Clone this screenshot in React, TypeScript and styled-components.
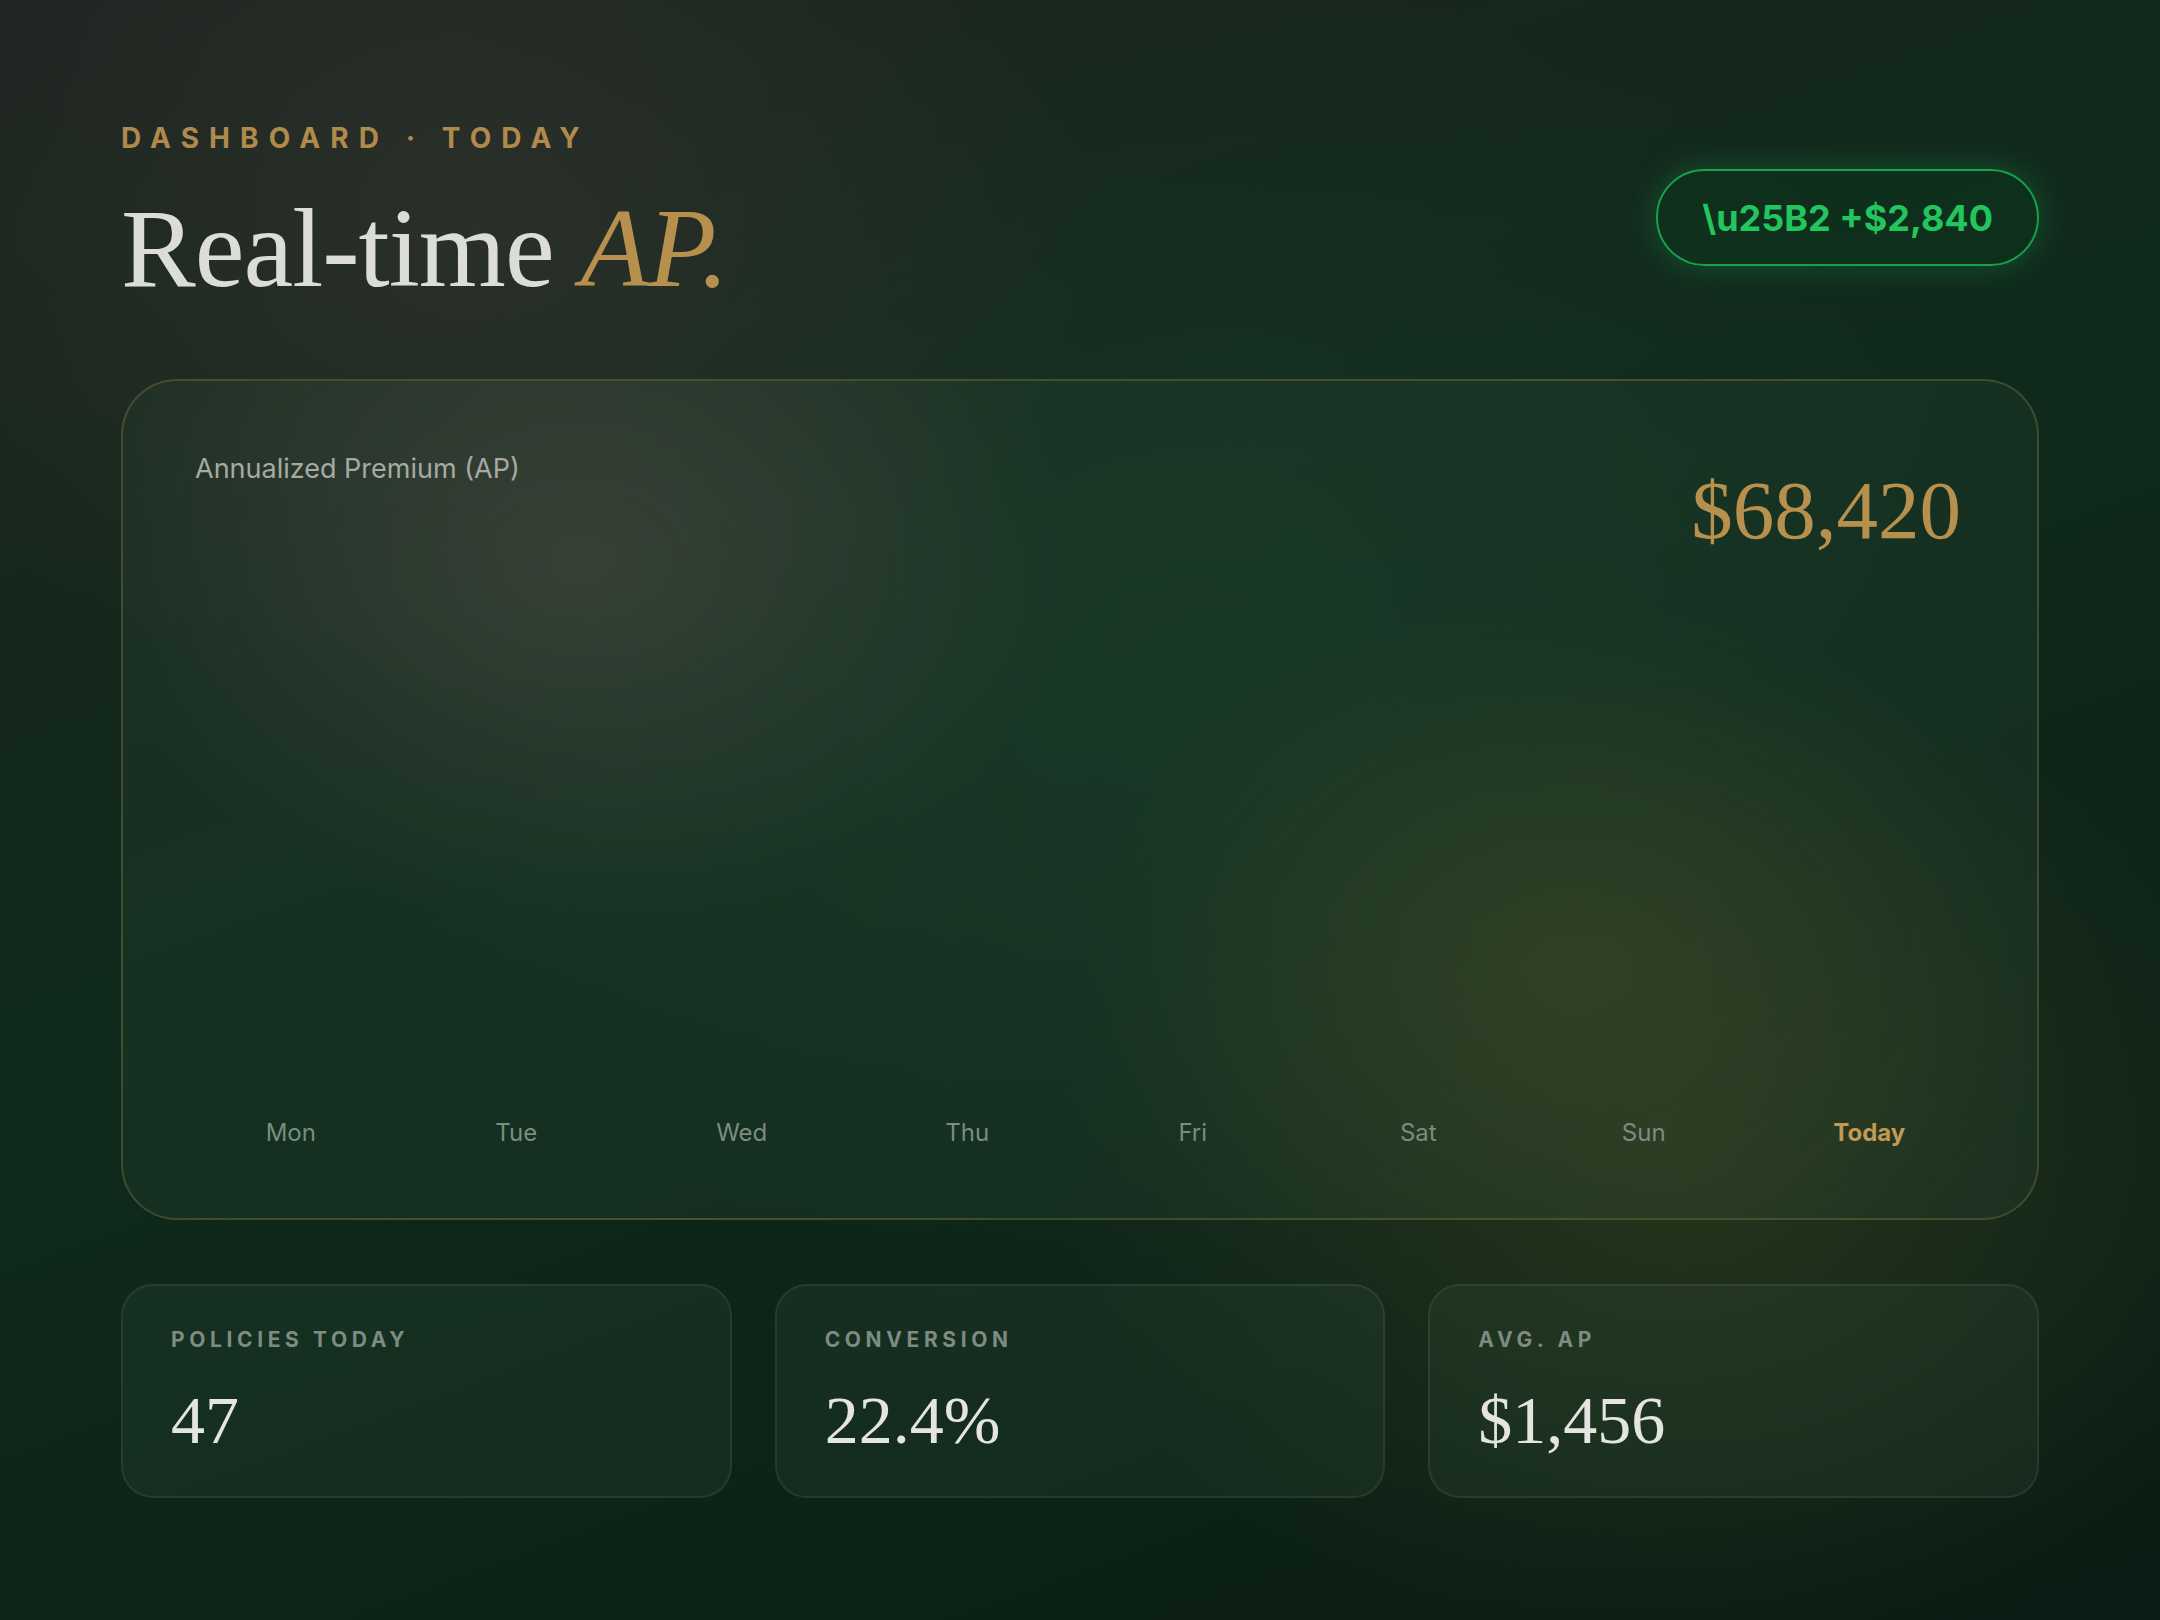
import React from "react";
import styled, { createGlobalStyle } from "styled-components";

const GlobalStyle = createGlobalStyle`
  html, body {
    margin: 0;
    padding: 0;
    background: #0c1f16;
  }
  * {
    box-sizing: border-box;
  }
`;

const Page = styled.div`
  width: 2160px;
  height: 1620px;
  padding: 118px 121px 0;
  font-family: Inter, "Noto Sans", sans-serif;
  background:
    radial-gradient(ellipse 900px 700px at 22% 14%, rgba(54, 54, 48, 0.6), transparent 70%),
    radial-gradient(ellipse 900px 700px at 78% 72%, rgba(48, 60, 30, 0.7), transparent 70%),
    radial-gradient(ellipse 1100px 900px at 55% 40%, rgba(24, 58, 38, 0.6), transparent 75%),
    linear-gradient(160deg, #1e2420 0%, #0f2a1c 45%, #0a1c13 100%);
  overflow: hidden;
`;

const Header = styled.header`
  display: flex;
  justify-content: space-between;
  align-items: flex-start;
`;

const TitleBlock = styled.div`
  display: flex;
  flex-direction: column;
`;

const Eyebrow = styled.div`
  font-size: 28px;
  font-weight: 700;
  letter-spacing: 0.36em;
  color: #b08a4c;
  line-height: 40px;
`;

const Title = styled.h1`
  margin: 30px 0 0;
  font-family: "Liberation Serif", "DejaVu Serif", serif;
  font-weight: 400;
  font-size: 112px;
  line-height: 120px;
  letter-spacing: -1px;
  color: #dcdcd8;
`;

const Accent = styled.em`
  font-style: italic;
  color: #b8904e;
`;

const DeltaBadge = styled.div`
  margin-top: 51px;
  height: 97px;
  padding: 0 44px;
  display: flex;
  align-items: center;
  border: 2px solid #16a34a;
  border-radius: 999px;
  background: rgba(10, 60, 30, 0.35);
  box-shadow: 0 0 32px rgba(34, 197, 94, 0.28);
  color: #22c55e;
  font-size: 36px;
  font-weight: 700;
`;

const ChartCard = styled.section`
  margin-top: 71px;
  height: 841px;
  padding: 70px 72px 69px;
  display: flex;
  flex-direction: column;
  border: 2px solid rgba(176, 146, 80, 0.28);
  border-radius: 56px;
  background:
    radial-gradient(ellipse 700px 520px at 24% 22%, rgba(80, 78, 70, 0.5), transparent 70%),
    radial-gradient(ellipse 700px 520px at 76% 70%, rgba(70, 80, 40, 0.42), transparent 70%),
    rgba(40, 70, 50, 0.28);
`;

const ChartHead = styled.div`
  display: flex;
  justify-content: space-between;
  align-items: flex-start;
`;

const ChartLabel = styled.div`
  font-size: 27px;
  color: #a6aaa3;
  line-height: 36px;
`;

const ChartValue = styled.div`
  margin-top: 14px;
  margin-right: 4px;
  font-family: "Liberation Serif", "DejaVu Serif", serif;
  font-size: 83px;
  line-height: 90px;
  color: #b8904e;
`;

const Bars = styled.div`
  flex: 1;
  display: grid;
  grid-template-columns: repeat(8, 1fr);
  column-gap: 34px;
  align-items: end;
`;

const DayCol = styled.div`
  display: flex;
  flex-direction: column;
  align-items: center;
`;

const Bar = styled.div<{ today?: boolean }>`
  width: 100%;
  border-radius: 14px 14px 4px 4px;
  background: ${({ today }) =>
    today ? "linear-gradient(180deg, #c9a15a, #8a6a34)" : "rgba(160, 180, 160, 0.18)"};
`;

const DayLabel = styled.div<{ today?: boolean }>`
  margin-top: 12px;
  font-size: 24px;
  line-height: 32px;
  font-weight: ${({ today }) => (today ? 700 : 400)};
  color: ${({ today }) => (today ? "#c29a56" : "#7b8c80")};
`;

const StatRow = styled.div`
  margin-top: 64px;
  display: grid;
  grid-template-columns: repeat(3, 1fr);
  gap: 43px;
`;

const StatCard = styled.div`
  height: 214px;
  padding: 40px 48px 0;
  border: 2px solid rgba(255, 255, 255, 0.07);
  border-radius: 32px;
  background: rgba(50, 80, 60, 0.22);
`;

const StatLabel = styled.div`
  font-size: 21px;
  font-weight: 700;
  letter-spacing: 0.22em;
  color: #7e8b82;
  line-height: 28px;
`;

const StatValue = styled.div`
  margin-top: 26px;
  font-family: "Liberation Serif", "DejaVu Serif", serif;
  font-size: 68px;
  line-height: 80px;
  color: #e4e4e0;
`;

const days = [
  { day: "Mon", value: 0 },
  { day: "Tue", value: 0 },
  { day: "Wed", value: 0 },
  { day: "Thu", value: 0 },
  { day: "Fri", value: 0 },
  { day: "Sat", value: 0 },
  { day: "Sun", value: 0 },
  { day: "Today", value: 0, today: true },
];

const stats = [
  { label: "POLICIES TODAY", value: "47" },
  { label: "CONVERSION", value: "22.4%" },
  { label: "AVG. AP", value: "$1,456" },
];

export default function App() {
  return (
    <>
      <GlobalStyle />
      <Page>
        <Header>
          <TitleBlock>
            <Eyebrow>DASHBOARD · TODAY</Eyebrow>
            <Title>
              Real-time <Accent>AP.</Accent>
            </Title>
          </TitleBlock>
          <DeltaBadge>{"\\u25B2 +$2,840"}</DeltaBadge>
        </Header>

        <ChartCard>
          <ChartHead>
            <ChartLabel>Annualized Premium (AP)</ChartLabel>
            <ChartValue>$68,420</ChartValue>
          </ChartHead>
          <Bars>
            {days.map((d) => (
              <DayCol key={d.day}>
                <Bar today={d.today} style={{ height: d.value }} />
                <DayLabel today={d.today}>{d.day}</DayLabel>
              </DayCol>
            ))}
          </Bars>
        </ChartCard>

        <StatRow>
          {stats.map((s) => (
            <StatCard key={s.label}>
              <StatLabel>{s.label}</StatLabel>
              <StatValue>{s.value}</StatValue>
            </StatCard>
          ))}
        </StatRow>
      </Page>
    </>
  );
}
